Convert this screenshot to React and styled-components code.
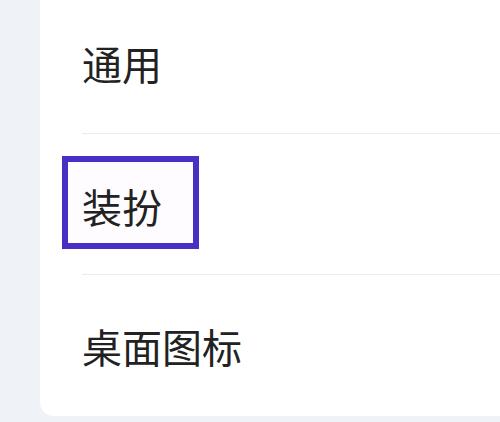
import styled, { createGlobalStyle } from 'styled-components';

const items = [
  { id: 'general', label: '通用' },
  { id: 'theme', label: '装扮', active: true },
  { id: 'icons', label: '桌面图标' },
];

const SettingsList = () => {
  return (
    <StyledPage>
      <GlobalStyle />
      <StyledCard>
        {items.map((item, i) => (
          <StyledRow key={item.id} $last={i === items.length - 1}>
            <StyledLabel $active={item.active}>{item.label}</StyledLabel>
          </StyledRow>
        ))}
      </StyledCard>
    </StyledPage>
  );
};

export default SettingsList;

const GlobalStyle = createGlobalStyle`
  html, body {
    margin: 0;
    padding: 0;
    background: #eff3f8;
  }

  body {
    font-family: "Noto Sans CJK SC", "Noto Sans", sans-serif;
  }
`;

const StyledPage = styled.div`
  width: 500px;
  height: 422px;
  overflow: hidden;
  background: #eff3f8;
  padding-left: 40px;
  box-sizing: border-box;
`;

const StyledCard = styled.div`
  background: #ffffff;
  border-radius: 0 0 0 14px;
  margin-top: -7px;
  padding-left: 42px;
  display: flex;
  flex-direction: column;
`;

const StyledRow = styled.div`
  height: 141px;
  display: flex;
  align-items: center;
  border-bottom: ${props => (props.$last ? 'none' : '1px solid #ececef')};
  box-sizing: border-box;
`;

const StyledLabel = styled.span`
  font-size: 40px;
  line-height: 1;
  color: #222222;

  ${props =>
    props.$active &&
    `
    border: 6px solid #4a2fc4;
    background: #fffcff;
    padding: 24px 31px 17px 14px;
    margin: -28px -37px -25px -20px;
  `}
`;
